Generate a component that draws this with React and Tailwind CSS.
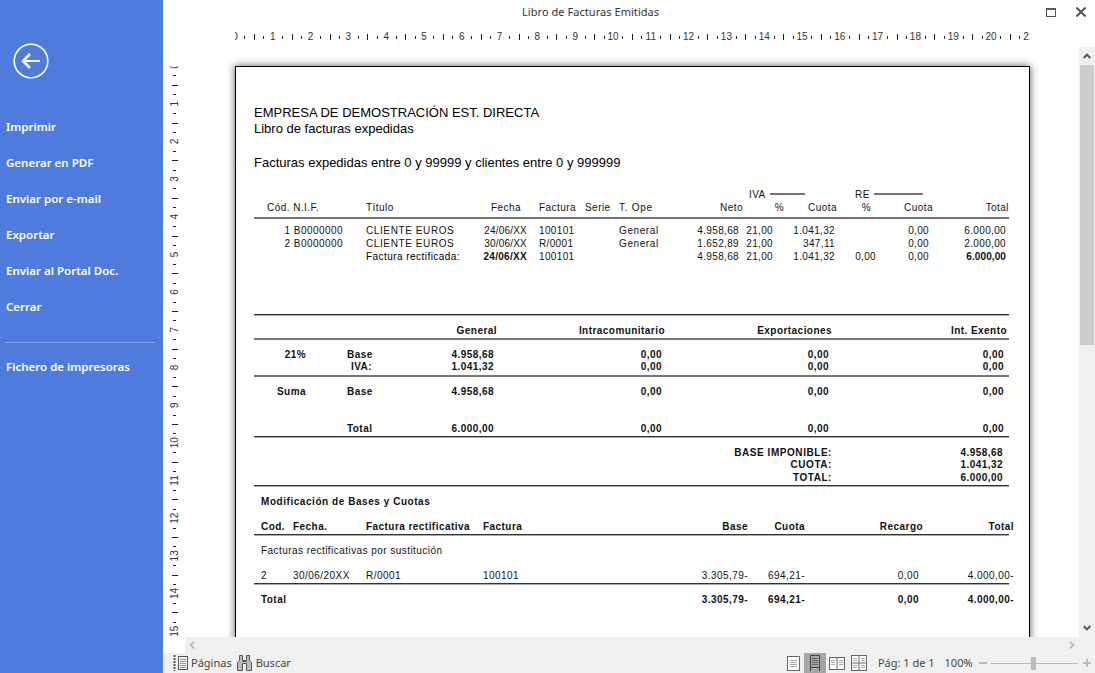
const menu = ['Imprimir', 'Generar en PDF', 'Enviar por e-mail', 'Exportar', 'Enviar al Portal Doc.', 'Cerrar']

function HRuler() {
  const ticks = Array.from({ length: 85 }, (_, i) => i)
  return (
    <svg width="795" height="23" className="block">
      {ticks.map((i) => {
        const x = i * 9.45
        if (i % 4 === 0) {
          return <text key={i} x={x} y="16" textAnchor="middle" fontSize="10" fontFamily="'Liberation Sans', sans-serif" fill="#333">{i / 4}</text>
        }
        const mid = i % 2 === 0
        return <rect key={i} x={Math.round(x)} y={mid ? 10 : 12} width="1" height={mid ? 6 : 3} fill="#222" />
      })}
    </svg>
  )
}

function VRuler() {
  const ticks = Array.from({ length: 62 }, (_, i) => i)
  return (
    <svg width="22" height="571" className="block">
      {ticks.map((i) => {
        const y = i * 9.42
        if (i % 4 === 0) {
          return <text key={i} transform={`translate(15 ${y}) rotate(-90)`} textAnchor="middle" fontSize="10" fontFamily="'Liberation Sans', sans-serif" fill="#333">{i / 4}</text>
        }
        const mid = i % 2 === 0
        return <rect key={i} x={mid ? 9 : 10} y={Math.round(y)} width={mid ? 6 : 3} height="1" fill="#222" />
      })}
    </svg>
  )
}

function Rule({ className = '' }) {
  return <div className={`h-[2px] w-[755px] bg-[#777] ${className}`} />
}

function FacturaRow({ nif, title, date, factura, tipo, neto, pct, cuota, rePct, reCuota, total, bold }) {
  return (
    <div className="grid grid-cols-[89px_132px_52px_53px_39px_71px_53px_41px_53px_43px_53px_76px] h-[13px] tracking-[0.35px]">
      <span className="text-right tracking-[0.45px]">{nif}</span>
      <span className={`pl-[23px] whitespace-nowrap ${bold ? 'text-black tracking-[0.45px]' : 'tracking-[0.6px]'}`}>{title}</span>
      <span className={`text-right ${bold ? 'font-bold tracking-[0.3px]' : 'tracking-[0.2px]'}`}>{date}</span>
      <span className="pl-[12px]">{factura}</span>
      <span />
      <span className="tracking-[0.6px]">{tipo}</span>
      <span className="text-right pr-[4px]">{neto}</span>
      <span className="text-right pr-[11px]">{pct}</span>
      <span className="text-right pr-[2px]">{cuota}</span>
      <span className="text-right pr-[4px]">{rePct}</span>
      <span className="text-right pr-[4px]">{reCuota}</span>
      <span className={`text-right pr-[3px] ${bold ? 'font-bold tracking-[0.1px]' : ''}`}>{total}</span>
    </div>
  )
}

function ResumenRow({ label, sub, iva, base, h = 'h-[13px]' }) {
  const zero = '0,00'
  return (
    <div className={`grid grid-cols-[52px_94px_97px_168px_167px_175px] font-bold ${h}`}>
      <span className="text-right">{label}</span>
      <span className={iva ? 'pl-[45px]' : 'pl-[41px]'}>{sub}</span>
      <span className="text-right pr-[3px]">{base}</span>
      <span className="text-right pr-[3px]">{zero}</span>
      <span className="text-right pr-[3px]">{zero}</span>
      <span className="text-right pr-[3px]">{zero}</span>
    </div>
  )
}

function TotalRow({ label, value, h = 'h-[13px]' }) {
  return (
    <div className={`grid grid-cols-[578px_171px] font-bold ${h}`}>
      <span className="text-right tracking-[0.55px]">{label}</span>
      <span className="text-right">{value}</span>
    </div>
  )
}

function ModRow({ cells, className = '' }) {
  return (
    <div className={`grid grid-cols-[39px_73px_117px_117px_148px_57px_118px_91px] h-[13px] whitespace-nowrap ${className}`}>
      <span className="pl-[7px]">{cells[0]}</span>
      <span>{cells[1]}</span>
      <span>{cells[2]}</span>
      <span>{cells[3]}</span>
      <span className="text-right">{cells[4]}</span>
      <span className="text-right">{cells[5]}</span>
      <span className="text-right">{cells[6]}</span>
      <span className="text-right">{cells[7]}</span>
    </div>
  )
}

function ReportPage() {
  const darkRule = '!bg-[#333] border-b border-[#aaa]'
  return (
    <div className="mt-[19px] ml-[50px] w-[795px] h-[1123px] shrink-0 bg-white border border-black shadow-[0_0_8px_rgba(0,0,0,0.65)] pl-[18px] font-['Liberation_Sans',Arial,sans-serif] text-[#111] text-[10px] leading-[13px] tracking-[0.45px]">
      <div className="mt-[38px] text-[13px] leading-[16px] tracking-normal text-black whitespace-nowrap">EMPRESA DE DEMOSTRACIÓN EST. DIRECTA</div>
      <div className="text-[13px] leading-[16px] tracking-normal text-black">Libro de facturas expedidas</div>
      <div className="mt-[18px] text-[13px] leading-[16px] tracking-normal text-black">Facturas expedidas entre 0 y 99999 y clientes entre 0 y 999999</div>

      <div className="mt-[16px] h-[14px] flex items-center pl-[495px]">
        <span className="w-[21px]">IVA</span>
        <span className="w-[35px] h-[2px] bg-[#777]" />
        <span className="ml-[50px] w-[19px]">RE</span>
        <span className="w-[49px] h-[2px] bg-[#777]" />
      </div>
      <div className="grid grid-cols-[89px_132px_52px_53px_39px_71px_53px_41px_53px_43px_53px_76px] h-[13px]">
        <span className="pl-[13px] whitespace-nowrap">Cód. N.I.F.</span>
        <span className="pl-[23px]">Título</span>
        <span className="text-right pr-[6px]">Fecha</span>
        <span className="pl-[12px]">Factura</span>
        <span className="pl-[5px]">Serie</span>
        <span className="tracking-[0.7px]">T. Ope</span>
        <span className="text-right">Neto</span>
        <span className="text-right">%</span>
        <span className="text-right">Cuota</span>
        <span className="text-right pr-[9px]">%</span>
        <span className="text-right">Cuota</span>
        <span className="text-right">Total</span>
      </div>
      <Rule className="mt-[3px]" />
      <div className="mt-[5px]">
        <FacturaRow nif="1 B0000000" title="CLIENTE EUROS" date="24/06/XX" factura="100101" tipo="General" neto="4.958,68" pct="21,00" cuota="1.041,32" reCuota="0,00" total="6.000,00" />
        <FacturaRow nif="2 B0000000" title="CLIENTE EUROS" date="30/06/XX" factura="R/0001" tipo="General" neto="1.652,89" pct="21,00" cuota="347,11" reCuota="0,00" total="2.000,00" />
        <FacturaRow title="Factura rectificada:" date="24/06/XX" factura="100101" neto="4.958,68" pct="21,00" cuota="1.041,32" rePct="0,00" reCuota="0,00" total="6.000,00" bold />
      </div>

      <Rule className={`mt-[51px] ${darkRule}`} />
      <div className="mt-[8px] grid grid-cols-[52px_94px_97px_168px_167px_175px] h-[13px] font-bold">
        <span />
        <span />
        <span className="text-right">General</span>
        <span className="text-right">Intracomunitario</span>
        <span className="text-right">Exportaciones</span>
        <span className="text-right">Int. Exento</span>
      </div>
      <Rule className="mt-[1px]" />
      <div className="mt-[8px]">
        <ResumenRow label="21%" sub="Base" base="4.958,68" h="h-[12px]" />
        <ResumenRow sub="IVA:" base="1.041,32" iva h="h-[12px]" />
      </div>
      <Rule className="mt-[3px]" />
      <div className="mt-[8px]">
        <ResumenRow label="Suma" sub="Base" base="4.958,68" />
      </div>
      <div className="mt-[24px]">
        <ResumenRow sub="Total" base="6.000,00" />
      </div>
      <Rule className={`mt-[1px] ${darkRule}`} />
      <div className="mt-[8px]">
        <TotalRow label="BASE IMPONIBLE:" value="4.958,68" h="h-[12px]" />
        <TotalRow label="CUOTA:" value="1.041,32" />
        <TotalRow label="TOTAL:" value="6.000,00" />
      </div>
      <Rule className={`mt-[1px] ${darkRule}`} />
      <div className="mt-[8px] h-[13px] pl-[7px] font-bold tracking-[0.55px]">Modificación de Bases y Cuotas</div>
      <ModRow className="mt-[12px] font-bold" cells={['Cod.', 'Fecha.', 'Factura rectificativa', 'Factura', 'Base', 'Cuota', 'Recargo', 'Total']} />
      <Rule className={`mt-[1px] ${darkRule}`} />
      <div className="mt-[8px] h-[13px] pl-[7px]">Facturas rectificativas por sustitución</div>
      <ModRow className="mt-[12px]" cells={['2', '30/06/20XX', 'R/0001', '100101', '3.305,79-', '694,21-', <span className="pr-[4px]">0,00</span>, '4.000,00-']} />
      <Rule className={`mt-[1px] ${darkRule}`} />
      <ModRow className="mt-[8px] font-bold" cells={['Total', '', '', '', '3.305,79-', '694,21-', <span className="pr-[4px]">0,00</span>, '4.000,00-']} />
    </div>
  )
}

function PagesIcon() {
  return (
    <svg width="16" height="16" viewBox="0 0 16 16" fill="none" stroke="#555" className="shrink-0">
      <path d="M1.5 0v16" strokeDasharray="2 1" strokeWidth="2" />
      <rect x="5.5" y="1.5" width="9" height="13" />
      <path d="M7 4.5h6M7 6.5h6M7 8.5h6M7 10.5h6M7 12.5h6" stroke="#999" />
    </svg>
  )
}

function BinocularsIcon() {
  return (
    <svg width="17" height="18" viewBox="0 0 17 18" fill="none" stroke="#555" className="shrink-0">
      <path d="M3.5 1.5h3v5h4v-5h3v5l2 2v8h-5v-7h-4v7h-5v-8l2-2z" fill="#bbb" />
      <path d="M6.5 7.5h4" />
    </svg>
  )
}

function ViewIcon({ kind }) {
  if (kind === 'single') {
    return (
      <svg width="13" height="15" viewBox="0 0 13 15" fill="none" stroke="#666">
        <rect x="0.5" y="0.5" width="12" height="14" fill="#fff" />
        <path d="M3 4.5h7M3 6.5h7M3 8.5h7M3 10.5h7" stroke="#aaa" />
      </svg>
    )
  }
  if (kind === 'scroll') {
    return (
      <svg width="10" height="16" viewBox="0 0 10 16" fill="none" stroke="#444">
        <path d="M.5 16V.5h9V16M.5 12.5h9" />
        <path d="M2 3.5h6M2 5.5h6M2 7.5h6M2 9.5h6" stroke="#666" />
      </svg>
    )
  }
  if (kind === 'double') {
    return (
      <svg width="16" height="13" viewBox="0 0 16 13" fill="none" stroke="#666">
        <rect x="0.5" y="0.5" width="15" height="12" fill="#fff" />
        <path d="M8 0v13" />
        <path d="M2 3.5h4M2 5.5h4M2 7.5h4M10 3.5h4M10 5.5h4M10 7.5h4" stroke="#aaa" />
      </svg>
    )
  }
  return (
    <svg width="16" height="16" viewBox="0 0 16 16" fill="none" stroke="#666">
      <rect x="0.5" y="0.5" width="15" height="15" fill="#fff" />
      <path d="M8 0v16M0 8h16" />
      <path d="M2 3.5h4M2 5.5h4M10 3.5h4M10 5.5h4M2 10.5h4M2 12.5h4M10 10.5h4M10 12.5h4" stroke="#aaa" />
    </svg>
  )
}

export default function App() {
  return (
    <div className="flex w-[1095px] h-[673px] overflow-hidden bg-white font-['Noto_Sans',sans-serif]">
      <aside className="w-[163px] shrink-0 bg-[#4e7bdc] text-white">
        <svg width="36" height="36" viewBox="0 0 36 36" fill="none" stroke="#fff" className="mt-[43px] ml-[13px]">
          <circle cx="18" cy="18" r="16.8" strokeWidth="1.6" />
          <path d="M27 18H11" strokeWidth="2" />
          <path d="M17 11l-7 7 7 7" strokeWidth="2.6" />
        </svg>
        <nav className="mt-[30px] flex flex-col">
          {menu.map((item) => (
            <div key={item} className="h-9 flex items-center pl-[6px] text-[11.5px] font-semibold">{item}</div>
          ))}
        </nav>
        <div className="mt-[17px] mx-[5px] w-[150px] h-px bg-white/30" />
        <div className="mt-[6px] h-9 flex items-center pl-[6px] text-[11.5px] font-semibold">Fichero de impresoras</div>
      </aside>

      <main className="flex-1 min-w-0 flex flex-col">
        <header className="h-6 shrink-0 flex items-center">
          <span className="pl-[359px] w-[883px] text-[11px] tracking-[0.05px] text-[#333] whitespace-nowrap">Libro de Facturas Emitidas</span>
          <svg width="10" height="9" viewBox="0 0 10 9" fill="none" stroke="#555">
            <rect x="0.5" y="0.5" width="9" height="8" />
            <path d="M0 1.5h10" />
          </svg>
          <svg width="10" height="10" viewBox="0 0 10 10" stroke="#555" strokeWidth="2" className="ml-[20px]">
            <path d="M.5.5l9 9M9.5.5l-9 9" />
          </svg>
        </header>

        <div className="h-[23px] shrink-0 pl-[72px] overflow-hidden">
          <HRuler />
        </div>

        <div className="flex-1 min-h-0 flex">
          <div className="w-[22px] shrink-0 pt-[19px] overflow-hidden">
            <VRuler />
          </div>
          <div className="flex-1 min-w-0 overflow-hidden">
            <ReportPage />
          </div>
          <div className="w-4 shrink-0 bg-[#f0f0f0] flex flex-col">
            <div className="h-[18px] flex items-center justify-center">
              <svg width="8" height="6" viewBox="0 0 8 6" fill="none" stroke="#555" strokeWidth="2"><path d="M.7 5L4 1.6 7.3 5" /></svg>
            </div>
            <div className="h-[280px] mx-px bg-[#cdcdcd]" />
            <div className="flex-1" />
            <div className="h-[18px] flex items-center justify-center">
              <svg width="8" height="6" viewBox="0 0 8 6" fill="none" stroke="#555" strokeWidth="2"><path d="M.7 1L4 4.4 7.3 1" /></svg>
            </div>
          </div>
        </div>

        <div className="h-4 shrink-0 flex">
          <div className="w-[22px] bg-white" />
          <div className="flex-1 bg-[#f0f0f0] flex items-center justify-between px-[4px]">
            <svg width="6" height="8" viewBox="0 0 6 8" fill="none" stroke="#bbb" strokeWidth="2"><path d="M5 .7L1.6 4 5 7.3" /></svg>
            <svg width="6" height="8" viewBox="0 0 6 8" fill="none" stroke="#bbb" strokeWidth="2" className="mr-[16px]"><path d="M1 .7L4.4 4 1 7.3" /></svg>
          </div>
        </div>

        <footer className="h-5 shrink-0 bg-[#f0f0f0] flex items-center text-[11px] text-[#444] whitespace-nowrap">
          <div className="ml-[10px] flex items-center gap-[2px]">
            <PagesIcon />
            <span>Páginas</span>
          </div>
          <div className="ml-[4px] flex items-center gap-[3px]">
            <BinocularsIcon />
            <span>Buscar</span>
          </div>
          <div className="ml-[496px] w-[17px]"><ViewIcon kind="single" /></div>
          <div className="w-[22px] h-5 bg-[#a6a6a6] flex items-center justify-center"><ViewIcon kind="scroll" /></div>
          <div className="ml-[3px]"><ViewIcon kind="double" /></div>
          <div className="ml-[6px]"><ViewIcon kind="grid" /></div>
          <span className="ml-[11px]">Pág: 1 de 1</span>
          <span className="ml-[10px]">100%</span>
          <span className="ml-[6px] w-2 h-[2px] bg-[#bbb]" />
          <div className="ml-[4px] w-[87px] h-px bg-[#bbb] relative">
            <span className="absolute left-[40px] -top-[6px] w-[5px] h-[13px] bg-[#bbb]" />
          </div>
          <span className="ml-[5px] w-2 h-2 relative">
            <span className="absolute left-0 top-[3px] w-2 h-[2px] bg-[#bbb]" />
            <span className="absolute left-[3px] top-0 w-[2px] h-2 bg-[#bbb]" />
          </span>
        </footer>
      </main>
    </div>
  )
}
